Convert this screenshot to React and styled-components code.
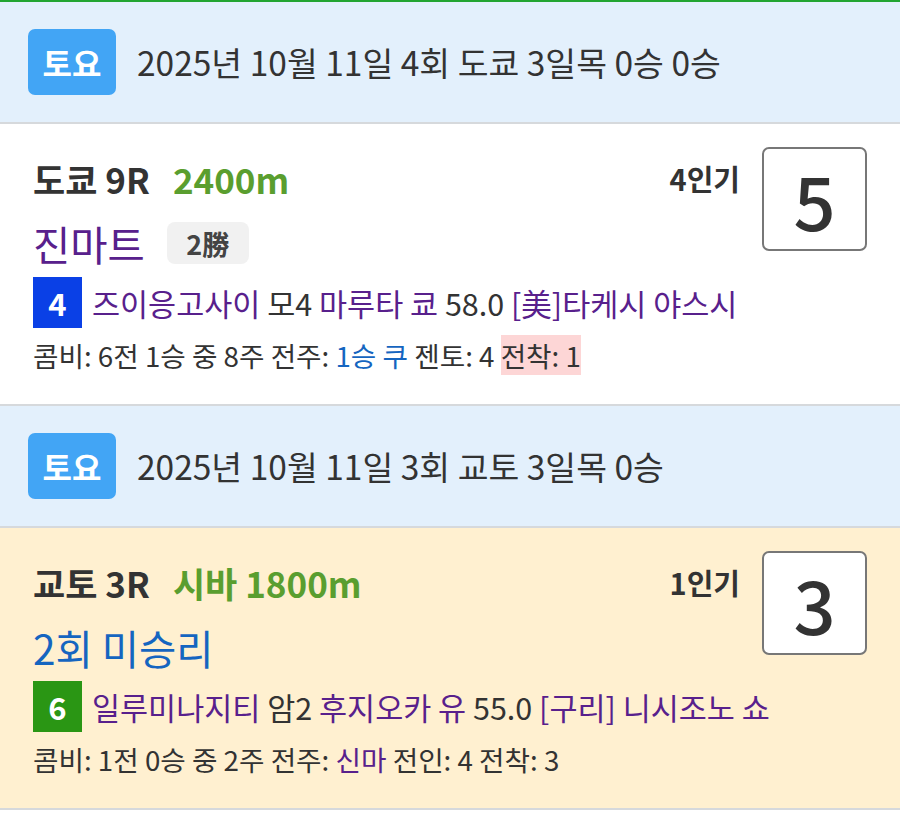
import React from 'react'
import styled, { createGlobalStyle } from 'styled-components'

const GlobalStyle = createGlobalStyle`
  html, body {
    margin: 0;
    padding: 0;
    background: #ffffff;
  }
  body {
    font-family: "Noto Sans CJK KR", "Noto Sans", sans-serif;
    color: #333333;
  }
`

const Page = styled.div`
  border-top: 2px solid #22a531;
  width: 900px;
`

const DayHeader = styled.div`
  display: flex;
  align-items: center;
  height: 120px;
  padding: 0 28px;
  background: #e3f0fc;
  border-bottom: 2px solid #d6d9dc;
  box-sizing: content-box;
`

const DayBadge = styled.div`
  display: flex;
  align-items: center;
  justify-content: center;
  width: 88px;
  height: 66px;
  border-radius: 7px;
  background: #42a5f5;
  color: #ffffff;
  font-size: 32px;
  font-weight: 700;
  line-height: 1;
`

const DayText = styled.div`
  margin-left: 21px;
  font-size: 33.5px;
  line-height: 1;
  color: #333333;
`

const Card = styled.div`
  height: 282px;
  padding: 23px 33px 0;
  background: ${(p) => (p.$highlight ? '#fff0d0' : '#ffffff')};
  border-bottom: 2px solid #d6d9dc;
  box-sizing: border-box;
`

const Top = styled.div`
  display: flex;
  align-items: flex-start;
`

const Left = styled.div`
  flex: 1;
  display: flex;
  flex-direction: column;
`

const TitleRow = styled.div`
  display: flex;
  align-items: center;
  height: 62px;
  font-size: 35px;
  font-weight: 700;
`

const Course = styled.span`
  color: #333333;
`

const Distance = styled.span`
  margin-left: 23px;
  color: #5a9e2f;
`

const NameRow = styled.div`
  display: flex;
  align-items: center;
  height: 68px;
`

const RaceName = styled.span`
  font-size: 40.5px;
  color: ${(p) => p.$color};
`

const ClassPill = styled.span`
  display: inline-flex;
  align-items: center;
  justify-content: center;
  margin-left: 22px;
  width: 82px;
  height: 42px;
  border-radius: 8px;
  background: #f1f1f1;
  color: #444444;
  font-size: 27px;
  font-weight: 700;
`

const Popularity = styled.div`
  height: 62px;
  display: flex;
  align-items: center;
  font-size: 29px;
  font-weight: 700;
  color: #333333;
  margin-right: 22px;
`

const NumberBox = styled.div`
  display: flex;
  align-items: center;
  justify-content: center;
  width: 105px;
  height: 104px;
  box-sizing: border-box;
  border: 2px solid #777777;
  border-radius: 7px;
  background: #ffffff;
  font-size: 74px;
  font-weight: 500;
  color: #333333;
  line-height: 1;
`

const HorseRow = styled.div`
  display: flex;
  align-items: center;
  height: 51px;
  font-size: 30.5px;
  white-space: pre;
`

const Gate = styled.span`
  display: flex;
  align-items: center;
  justify-content: center;
  width: 49px;
  height: 51px;
  margin-right: 10px;
  background: ${(p) => p.$bg};
  color: #ffffff;
  font-size: 31px;
  font-weight: 700;
`

const Purple = styled.span`
  color: #58208c;
`

const Blue = styled.span`
  color: #1565c0;
`

const InfoRow = styled.div`
  margin-top: 8px;
  height: 39px;
  line-height: 39px;
  font-size: 27.7px;
  color: #333333;
  white-space: pre;
`

const Mark = styled.span`
  background: #fdd6d6;
`

function Header({ text }) {
  return (
    <DayHeader>
      <DayBadge>토요</DayBadge>
      <DayText>{text}</DayText>
    </DayHeader>
  )
}

export default function App() {
  return (
    <Page>
      <GlobalStyle />
      <Header text="2025년 10월 11일 4회 도쿄 3일목 0승 0승" />
      <Card>
        <Top>
          <Left>
            <TitleRow>
              <Course>도쿄 9R</Course>
              <Distance>2400m</Distance>
            </TitleRow>
            <NameRow>
              <RaceName $color="#58208c">진마트</RaceName>
              <ClassPill>2勝</ClassPill>
            </NameRow>
          </Left>
          <Popularity>4인기</Popularity>
          <NumberBox>5</NumberBox>
        </Top>
        <HorseRow>
          <Gate $bg="#0a40e6">4</Gate>
          <span>
            <Purple>즈이응고사이</Purple> 모4 <Purple>마루타 쿄</Purple> 58.0 <Purple>[美]타케시 야스시</Purple>
          </span>
        </HorseRow>
        <InfoRow>
          콤비: 6전 1승 중 8주 전주: <Blue>1승 쿠</Blue> 젠토: 4 <Mark>전착: 1</Mark>
        </InfoRow>
      </Card>
      <Header text="2025년 10월 11일 3회 교토 3일목 0승" />
      <Card $highlight>
        <Top>
          <Left>
            <TitleRow>
              <Course>교토 3R</Course>
              <Distance>시바 1800m</Distance>
            </TitleRow>
            <NameRow>
              <RaceName $color="#1565c0">2회 미승리</RaceName>
            </NameRow>
          </Left>
          <Popularity>1인기</Popularity>
          <NumberBox>3</NumberBox>
        </Top>
        <HorseRow>
          <Gate $bg="#2a9614">6</Gate>
          <span>
            <Purple>일루미나지티</Purple> 암2 <Purple>후지오카 유</Purple> 55.0 <Purple>[구리] 니시조노 쇼</Purple>
          </span>
        </HorseRow>
        <InfoRow>
          콤비: 1전 0승 중 2주 전주: <Purple>신마</Purple> 전인: 4 전착: 3
        </InfoRow>
      </Card>
    </Page>
  )
}
